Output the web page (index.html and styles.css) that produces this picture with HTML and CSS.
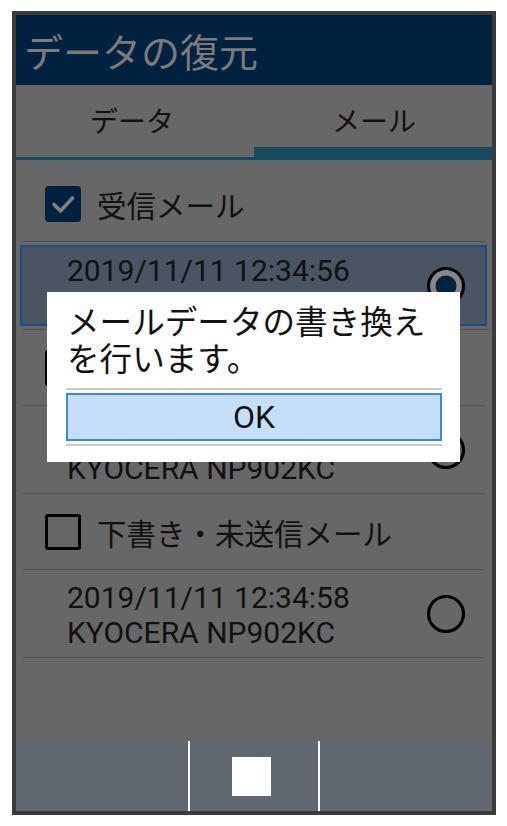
FILE: index.html
```html
<!DOCTYPE html>
<html lang="ja">
<head>
<meta charset="utf-8">
<title>データの復元</title>
<link rel="stylesheet" href="styles.css">
</head>
<body>
<div class="phone">
  <header class="titlebar">データの復元</header>
  <nav class="tabs">
    <div class="tab">データ</div>
    <div class="tab active">メール</div>
  </nav>
  <main class="list">
    <div class="check-row">
      <span class="box checked"><svg viewBox="0 0 36 36" width="36" height="36"><path d="M9 18.5 L15.5 25 L27.5 12" fill="none" stroke="#808080" stroke-width="3.6" stroke-linecap="round" stroke-linejoin="round"/></svg></span>
      <span class="label">受信メール</span>
    </div>
    <div class="item selected">
      <div class="lines">
        <div>2019/11/11 12:34:56</div>
        <div>KYOCERA NP902KC</div>
      </div>
      <svg class="radio" viewBox="0 0 40 40" width="40" height="40"><circle cx="20" cy="20" r="17.5" fill="#878787" stroke="#000" stroke-width="3.2"/><circle cx="20" cy="20" r="10.5" fill="#00213f"/></svg>
    </div>
    <div class="check-row">
      <span class="box"></span>
      <span class="label">送信メール</span>
    </div>
    <div class="item">
      <div class="lines">
        <div>2019/11/11 12:34:57</div>
        <div>KYOCERA NP902KC</div>
      </div>
      <svg class="radio" viewBox="0 0 40 40" width="40" height="40"><circle cx="20" cy="20" r="17.5" fill="none" stroke="#000" stroke-width="3.2"/></svg>
    </div>
    <div class="check-row">
      <span class="box"></span>
      <span class="label">下書き・未送信メール</span>
    </div>
    <div class="item">
      <div class="lines">
        <div>2019/11/11 12:34:58</div>
        <div>KYOCERA NP902KC</div>
      </div>
      <svg class="radio" viewBox="0 0 40 40" width="40" height="40"><circle cx="20" cy="20" r="17.5" fill="none" stroke="#000" stroke-width="3.2"/></svg>
    </div>
  </main>
  <footer class="navbar">
    <div class="nav-cell"></div>
    <div class="nav-sep"></div>
    <div class="nav-cell center"><span class="stop"></span></div>
    <div class="nav-sep"></div>
    <div class="nav-cell"></div>
  </footer>
  <div class="dialog">
    <p class="message">メールデータの書き換えを行います。</p>
    <div class="actions">
      <button class="ok">OK</button>
    </div>
  </div>
</div>
</body>
</html>
```
FILE: styles.css
```css
html, body {
  margin: 0;
  padding: 0;
  background: #ffffff;
}

body {
  font-family: Roboto, "Noto Sans CJK JP", sans-serif;
  color: #111;
}

.phone {
  position: relative;
  box-sizing: border-box;
  width: 484px;
  height: 804px;
  margin: 11px 0 0 12px;
  border: 4px solid #3b3b3b;
  display: flex;
  flex-direction: column;
  background: #676767;
}

.titlebar {
  height: 70px;
  flex: none;
  background: #00213f;
  color: #7b7b7b;
  font-family: "Noto Sans CJK JP", sans-serif;
  font-size: 39px;
  line-height: 70px;
  padding-left: 8px;
}

.tabs {
  height: 75px;
  flex: none;
  display: grid;
  grid-template-columns: 1fr 1fr;
  background: #676767;
}

.tab {
  display: flex;
  align-items: center;
  justify-content: center;
  padding-bottom: 2px;
  padding-right: 6px;
  font-family: "Noto Sans CJK JP", sans-serif;
  font-size: 28px;
  color: #111;
  border-bottom: 3px solid #174a5c;
}

.tab.active {
  border-bottom: 13px solid #174a5c;
  padding-top: 10px;
  padding-right: 0;
  padding-left: 2px;
}

.list {
  flex: 1;
  padding: 6px 0 0;
  display: flex;
  flex-direction: column;
}

.check-row {
  height: 75px;
  flex: none;
  display: flex;
  align-items: center;
  margin: 0 7px;
  padding-left: 22px;
  border-bottom: 1px solid #505050;
}

.box {
  box-sizing: border-box;
  width: 36px;
  height: 36px;
  border: 3px solid #000;
  border-radius: 3px;
  flex: none;
  display: flex;
}

.box.checked {
  border: none;
  border-radius: 4px;
  background: #00213f;
}

.label {
  margin-left: 16px;
  font-family: "Noto Sans CJK JP", sans-serif;
  font-size: 29.5px;
  color: #111;
}

.item {
  height: 88px;
  flex: none;
  box-sizing: border-box;
  margin: 0 7px;
  border-bottom: 1px solid #505050;
  display: flex;
  align-items: center;
  padding: 0 19px 0 44px;
  position: relative;
}

.lines {
  flex: 1;
  font-size: 30px;
  line-height: 35px;
  color: #111;
  padding-top: 3px;
}

.radio {
  flex: none;
}

.item.selected {
  margin: 0 5px 0 4px;
  padding: 0;
  border-bottom: none;
  height: 88px;
}

.item.selected::before {
  content: "";
  position: absolute;
  inset: 3px 0 4px 0;
  border: 2px solid #1a4b8a;
  background: #4a5462;
}

.item.selected::after {
  content: "";
  position: absolute;
  left: 3px;
  right: -2px;
  bottom: 0;
  border-bottom: 1px solid #505050;
}

.item.selected .lines,
.item.selected .radio {
  position: relative;
  z-index: 1;
}

.item.selected .lines {
  padding-left: 47px;
}

.item.selected .radio {
  margin-right: 21px;
}

.navbar {
  height: 70px;
  flex: none;
  background: #5f6870;
  display: grid;
  grid-template-columns: 172px 2px 128px 2px 1fr;
}

.nav-sep {
  background: #ffffff;
}

.nav-cell.center {
  display: flex;
  align-items: center;
  justify-content: center;
}

.stop {
  width: 39px;
  height: 39px;
  background: #ffffff;
  margin-left: -5px;
}

.dialog {
  position: absolute;
  z-index: 10;
  left: 31px;
  top: 277px;
  width: 413px;
  height: 170px;
  box-sizing: border-box;
  background: #ffffff;
  padding: 9px 18px 0 19px;
}

.message {
  margin: 0;
  padding-left: 1px;
  font-family: "Noto Sans CJK JP", sans-serif;
  font-size: 32.6px;
  line-height: 37px;
  color: #111;
  height: 87px;
}

.actions {
  border-top: 2px solid #c9c9c9;
  border-bottom: 2px solid #c9c9c9;
  padding: 3px 0;
}

.ok {
  display: block;
  width: 100%;
  height: 48px;
  box-sizing: border-box;
  border: 2px solid #3f88e2;
  background: #c5dffb;
  font-family: Roboto, sans-serif;
  font-size: 32px;
  color: #111;
  padding: 0;
}
```
